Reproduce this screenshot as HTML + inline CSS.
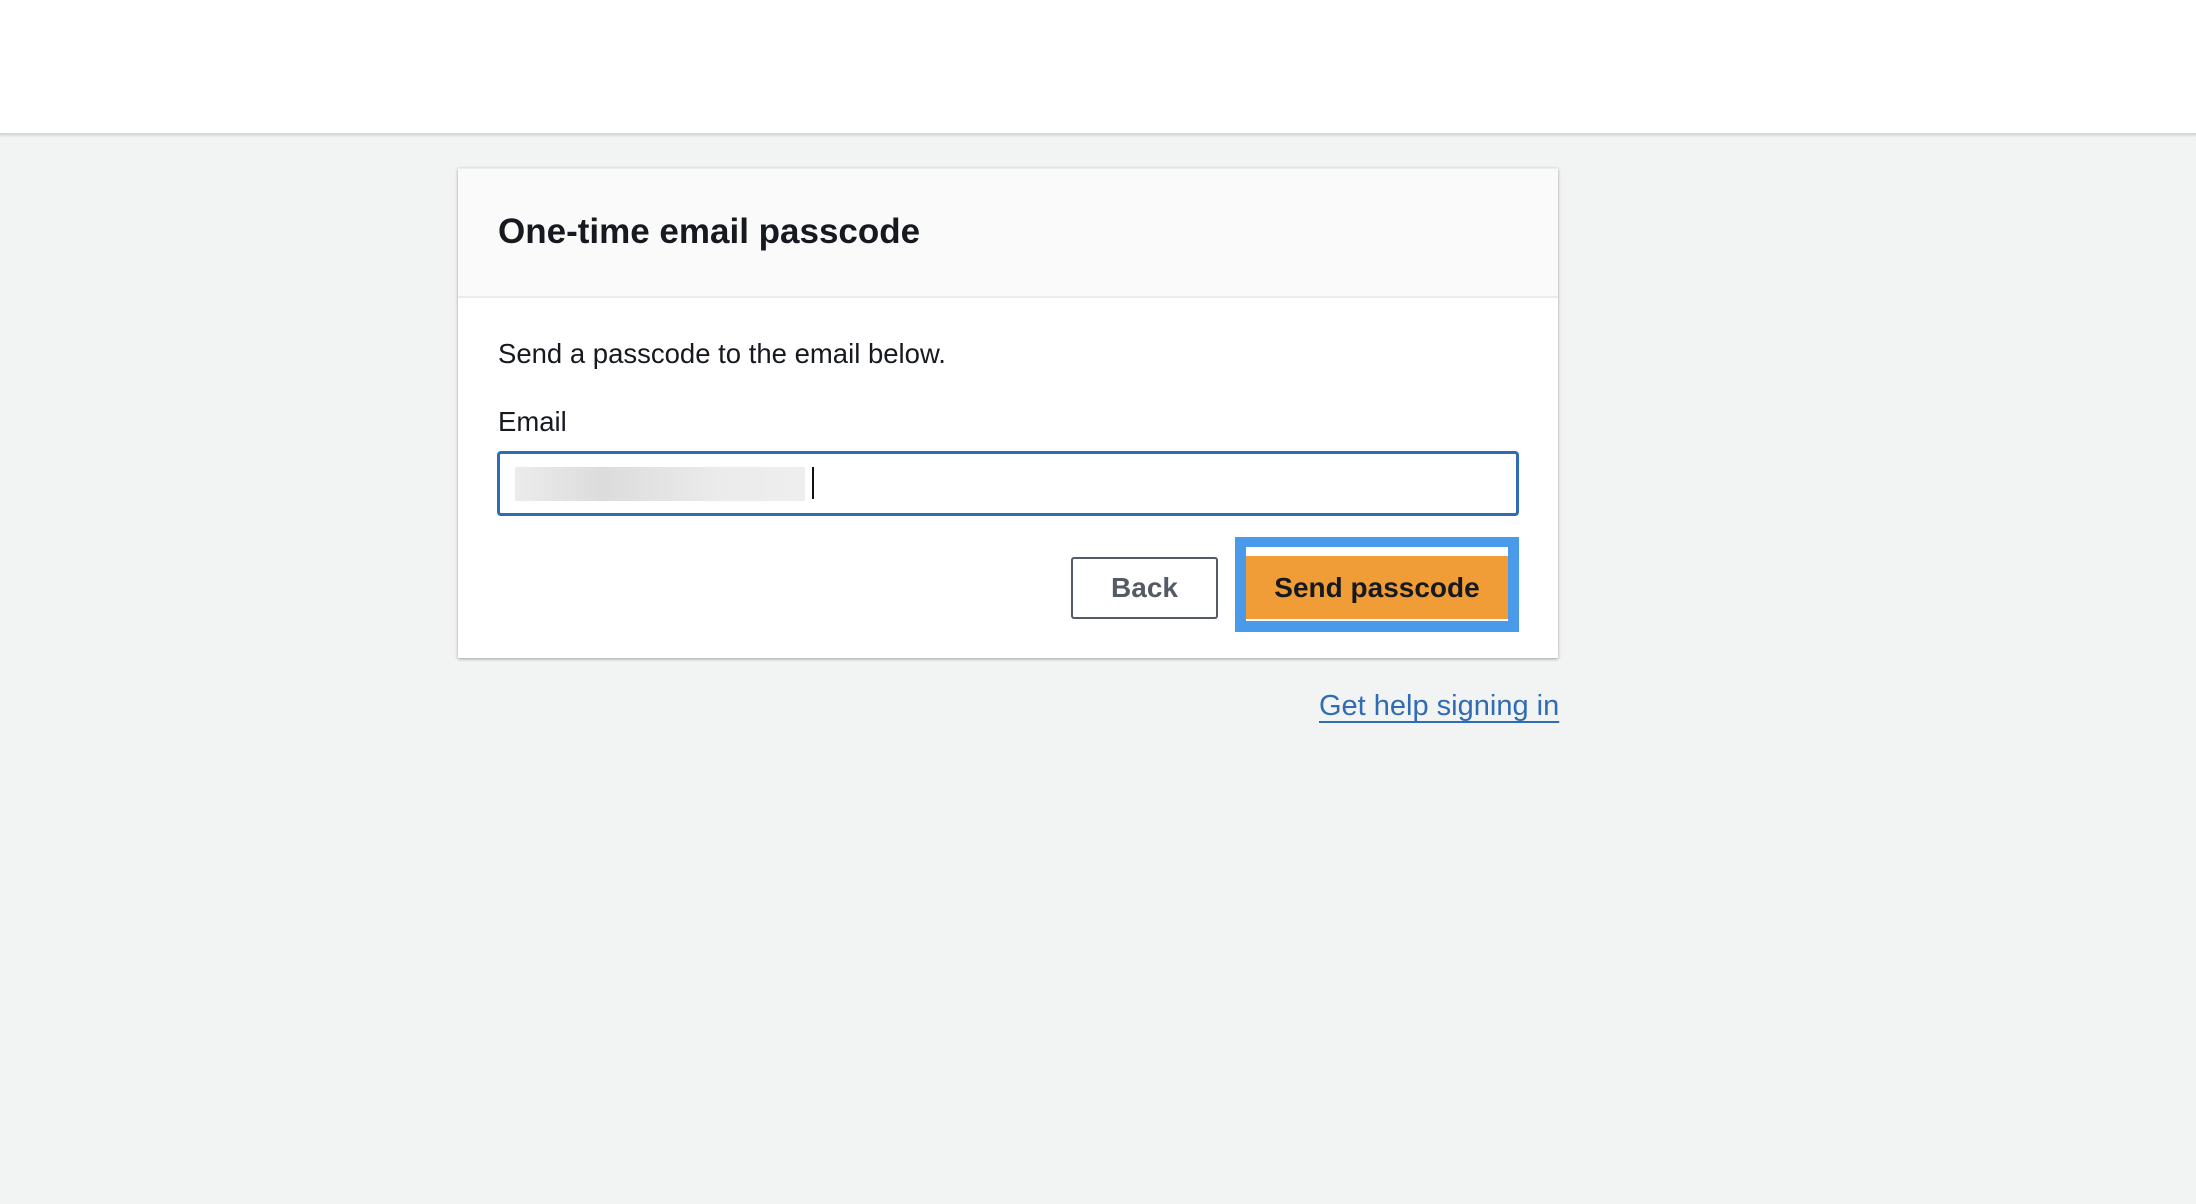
<!DOCTYPE html>
<html><head><style>
*{margin:0;padding:0;box-sizing:border-box}
body{width:2196px;height:1204px;background:#f2f3f3;font-family:"Liberation Sans",sans-serif;position:relative;overflow:hidden;color:#16191f}
.top{position:absolute;left:0;top:0;width:2196px;height:135px;background:#fff;border-bottom:2px solid #d5d9d9;box-shadow:0 1px 2px rgba(0,0,0,.1)}
.card{position:absolute;left:458px;top:168px;width:1100px;height:490px;background:#fff;box-shadow:0 1px 3px rgba(0,0,0,.35);border-top:1px solid #eaeded}
.hd{height:129px;background:#fafafa;border-bottom:2px solid #eaeded;position:relative}
.hd h1{position:absolute;left:40px;top:43px;font-size:35px;font-weight:bold;letter-spacing:0}
.t{position:absolute;font-size:27.5px}
.inp{position:absolute;left:39px;top:282px;width:1022px;height:65px;border:3px solid #2f6cb5;border-radius:4px;background:#fff}
.blur{position:absolute;left:15px;top:13px;width:290px;height:34px;background:linear-gradient(90deg,#ececec,#dcdcdc 30%,#ebebeb 70%,#eee)}
.caret{position:absolute;left:312px;top:13px;width:2px;height:32px;background:#111}
.back{position:absolute;left:613px;top:388px;width:147px;height:62px;border:2px solid #545b64;border-radius:3px;font-size:28px;font-weight:bold;color:#545b64;text-align:center;line-height:58px}
.sendo{position:absolute;left:777px;top:368px;width:284px;height:95px;background:#4a9aea}
.sendw{position:absolute;left:11px;top:10px;width:262px;height:74px;background:#fff}
.send{position:absolute;left:0;top:9px;width:262px;height:63px;background:#f09d38;font-size:28px;font-weight:bold;text-align:center;line-height:63px;color:#16191f}
.link{position:absolute;left:1319px;top:690px;font-size:29px;color:#2f6cb5;text-decoration:underline;text-underline-offset:6px;text-decoration-thickness:2px}
</style></head><body>
<div class="top"></div>
<div class="card">
<div class="hd"><h1>One-time email passcode</h1></div>
<div class="t" style="left:40px;top:169px">Send a passcode to the email below.</div>
<div class="t" style="left:40px;top:237px">Email</div>
<div class="inp"><div class="blur"></div><div class="caret"></div></div>
<div class="back">Back</div>
<div class="sendo"><div class="sendw"><div class="send">Send passcode</div></div></div>
</div>
<div class="link">Get help signing in</div>
</body></html>
